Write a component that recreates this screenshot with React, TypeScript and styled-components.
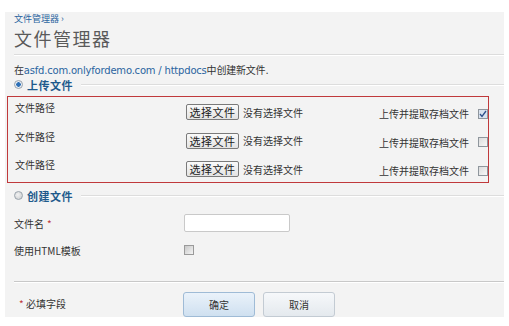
import React from "react";
import styled, { createGlobalStyle } from "styled-components";

const Global = createGlobalStyle`
  html, body { margin: 0; padding: 0; background: #ffffff; }
  body { font-family: "DejaVu Sans", "Noto Sans CJK SC", sans-serif; font-size: 10px; color: #333; }
  * { box-sizing: border-box; }
`;

const Page = styled.div`
  width: 509px;
  height: 326px;
  padding: 12px 5px 0 5px;
`;

const Panel = styled.div`
  background: #f3f3f3;
  height: 305px;
  overflow: hidden;
  padding: 0 0 0 9px;
`;

const Crumb = styled.div`
  height: 13px;
  font-size: 9px;
  line-height: 13px;
  color: #2a64a0;
  font-family: "Noto Sans CJK SC", sans-serif;
`;

const Title = styled.h1`
  margin: 1px 0 0 0;
  font-weight: normal;
  font-size: 18px;
  letter-spacing: 1.5px;
  line-height: 24px;
  color: #5a5a5a;
  font-family: "Noto Sans CJK SC", sans-serif;
`;

const Rule = styled.div`
  height: 2px;
  margin-top: 4px;
  border-top: 1px solid #dcdcdc;
  border-bottom: 1px solid #ffffff;
`;

const PathLine = styled.div`
  margin-top: 7px;
  font-size: 10px;
  line-height: 13px;
  color: #333;
  letter-spacing: -0.2px;
`;

const Link = styled.span`
  color: #2a64a0;
`;

const CjkText = styled.span`
  font-family: "Noto Sans CJK SC", sans-serif;
`;

const Legend = styled.div<{ $top: number }>`
  display: flex;
  align-items: center;
  gap: 4px;
  margin-top: ${(p) => p.$top}px;
  height: 13px;
`;

const Radio = styled.span<{ $on?: boolean }>`
  width: 9px;
  height: 9px;
  border-radius: 50%;
  border: 1px solid #9aa3ac;
  background: ${(p) =>
    p.$on
      ? "radial-gradient(circle, #2d6fb6 0 2px, #e8eef5 2.5px)"
      : "radial-gradient(circle at 40% 40%, #f2f2f2, #c6c9cc)"};
  flex: none;
`;

const LegendText = styled.span`
  font-family: "Noto Sans CJK SC", sans-serif;
  font-weight: bold;
  font-size: 11px;
  letter-spacing: 0.5px;
  color: #1e5a8c;
`;

const LegendLine = styled.span`
  flex: 1;
  height: 2px;
  margin-left: 4px;
  border-top: 1px solid #dddddd;
  border-bottom: 1px solid #ffffff;
`;

const UploadBox = styled.div`
  margin: 5px 0 0 -7px;
  width: 482px;
  height: 87px;
  border: 1px solid #c0393b;
  padding: 1px 0 0 7px;
`;

const UploadRow = styled.div`
  display: grid;
  grid-template-columns: 171px 57px 1fr auto 10px;
  align-items: center;
  height: 28.5px;
  font-family: "Noto Sans CJK SC", sans-serif;
  font-size: 10px;
`;

const Label = styled.span`
  color: #333;
  align-self: start;
  padding-top: 2px;
`;

const FileButton = styled.span`
  display: inline-flex;
  align-items: center;
  justify-content: center;
  width: 53px;
  height: 16px;
  border: 1px solid #7a7a7a;
  border-radius: 2px;
  background: linear-gradient(#fafafa, #e3e3e3);
  font-size: 11px;
  color: #222;
  letter-spacing: 0.5px;
`;

const Status = styled.span`
  color: #333;
`;

const Extract = styled.span`
  color: #333;
  padding-right: 9px;
  padding-top: 3px;
`;

const Check = styled.span<{ $on?: boolean }>`
  width: 10px;
  height: 10px;
  margin-top: 3px;
  border: 1px solid #8f969d;
  background: ${(p) => (p.$on ? "#d9e2ee" : "linear-gradient(135deg, #dcdcdc, #f8f8f8)")};
  display: inline-flex;
  align-items: center;
  justify-content: center;
`;

const FormRow = styled.div<{ $h: number; $top?: number }>`
  display: grid;
  grid-template-columns: 170px 1fr;
  align-items: center;
  height: ${(p) => p.$h}px;
  margin-top: ${(p) => p.$top ?? 0}px;
  font-family: "Noto Sans CJK SC", sans-serif;
  font-size: 10px;
  color: #333;
`;

const Star = styled.span`
  color: #c0393b;
  margin-left: 3px;
`;

const TextInput = styled.span`
  display: block;
  width: 106px;
  height: 18px;
  background: #fff;
  border: 1px solid #c9c9c9;
  border-radius: 2px;
`;

const GrayCheck = styled.span`
  display: block;
  width: 10px;
  height: 10px;
  border: 1px solid #9a9a9a;
  background: linear-gradient(135deg, #c8c8c8, #f4f4f4);
`;

const BottomRule = styled.div`
  margin-top: 21px;
  height: 2px;
  border-top: 1px solid #c8c8c8;
  border-bottom: 1px solid #ffffff;
`;

const Footer = styled.div`
  display: grid;
  grid-template-columns: 169px auto auto 1fr;
  align-items: center;
  margin-top: 9px;
  font-family: "Noto Sans CJK SC", sans-serif;
  font-size: 10px;
  color: #333;
`;

const Required = styled.span`
  padding-left: 2px;
  margin-top: -2px;
`;

const Btn = styled.span<{ $primary?: boolean }>`
  display: inline-flex;
  align-items: center;
  justify-content: center;
  width: 72px;
  height: 25px;
  margin-right: 8px;
  border-radius: 3px;
  border: 1px solid ${(p) => (p.$primary ? "#9fbbd6" : "#c3cbd3")};
  background: ${(p) => (p.$primary ? "linear-gradient(#eaf2fa, #cfe0f0)" : "linear-gradient(#f6f8fa, #e4e9ee)")};
  font-size: 10px;
  color: #333;
`;

const rows = [true, false, false];

export default function App() {
  return (
    <>
      <Global />
      <Page>
        <Panel>
          <Crumb>文件管理器 ›</Crumb>
          <Title>文件管理器</Title>
          <Rule />
          <PathLine>
            在<Link>asfd.com.onlyfordemo.com / httpdocs</Link>
            <CjkText>中创建新文件</CjkText>.
          </PathLine>
          <Legend $top={1}>
            <Radio $on />
            <LegendText>上传文件</LegendText>
            <LegendLine />
          </Legend>
          <UploadBox>
            {rows.map((on, i) => (
              <UploadRow key={i}>
                <Label>文件路径</Label>
                <FileButton>选择文件</FileButton>
                <Status>没有选择文件</Status>
                <Extract>上传并提取存档文件</Extract>
                <Check $on={on}>
                  {on && (
                    <svg width="8" height="8" viewBox="0 0 8 8">
                      <path d="M1 4 L3 6.5 L7 1" stroke="#2d4f8a" strokeWidth="1.3" fill="none" />
                    </svg>
                  )}
                </Check>
              </UploadRow>
            ))}
          </UploadBox>
          <Legend $top={6}>
            <Radio />
            <LegendText>创建文件</LegendText>
            <LegendLine />
          </Legend>
          <FormRow $h={34} $top={4}>
            <span>
              文件名<Star>*</Star>
            </span>
            <TextInput />
          </FormRow>
          <FormRow $h={20}>
            <span>使用HTML模板</span>
            <GrayCheck />
          </FormRow>
          <BottomRule />
          <Footer>
            <Required>
              <Star>*</Star> 必填字段
            </Required>
            <Btn $primary>确定</Btn>
            <Btn>取消</Btn>
          </Footer>
        </Panel>
      </Page>
    </>
  );
}
